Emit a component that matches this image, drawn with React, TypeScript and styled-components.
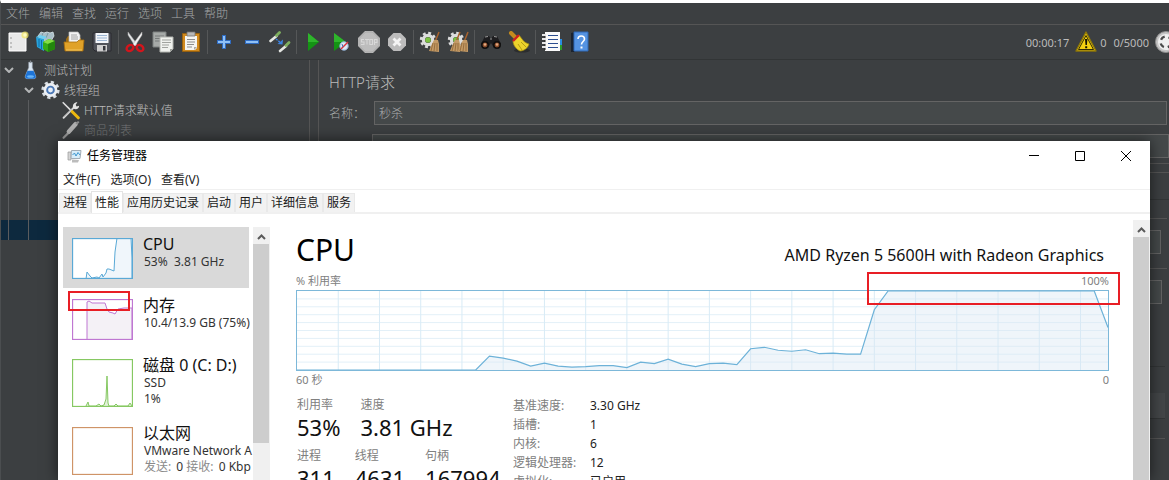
import React from "react";
import styled, { createGlobalStyle } from "styled-components";

const GlobalStyle = createGlobalStyle`
  * { box-sizing: border-box; }
  body {
    margin: 0;
    background: #3c3f41;
    font-family: "Noto Sans", "Noto Sans CJK SC", sans-serif;
    font-size: 12px;
  }
  button, input {
    font: inherit;
    color: inherit;
    margin: 0;
  }
`;

/* ---------- Host application ---------- */

const Desktop = styled.div`
  position: relative;
  display: flex;
  flex-direction: column;
  height: 100vh;
  overflow: hidden;
  border-top: 3px solid #ffffff;
  border-left: 1px solid #4b4e50;
  background: #3c3f41;
  color: #bbbbbb;
  font-weight: 300;
`;

const MenuBar = styled.nav`
  display: flex;
  gap: 9px;
  height: 22px;
  flex: none;
  padding-left: 5px;
  border-bottom: 1px solid #555555;
`;

const MenuButton = styled.button`
  padding: 0;
  border: 0;
  background: none;
  line-height: 20px;
  color: #a4a6a7;
`;

const Toolbar = styled.div`
  display: flex;
  align-items: center;
  height: 35px;
  flex: none;
  padding-left: 3px;
  border-bottom: 1px solid #323536;
`;

const ToolButton = styled.button`
  display: flex;
  align-items: center;
  justify-content: center;
  flex: none;
  width: 28px;
  height: 28px;
  padding: 0;
  border: 0;
  background: none;
`;

const ToolDivider = styled.span`
  flex: none;
  width: 1px;
  height: 24px;
  margin: 0 2px;
  background: #555758;
`;

const Status = styled.div`
  display: flex;
  align-items: center;
  flex: 1;
  justify-content: flex-end;
  min-width: 0;
  font-size: 11px;
  font-weight: 400;
  overflow: hidden;
`;

const StatusText = styled.span<{ $gap: number }>`
  margin-right: ${(p) => p.$gap}px;
  white-space: nowrap;
`;

const Clip = styled.span`
  display: flex;
  width: 14px;
  overflow: hidden;
  svg { flex: none; }
`;

const Workspace = styled.div`
  display: flex;
  flex: 1;
  min-height: 0;
`;

const Tree = styled.ul`
  flex: none;
  width: 309px;
  margin: 0;
  padding: 0;
  list-style: none;
  border-right: 1px solid #555555;
`;

const TreeRow = styled.li<{ $selected?: boolean; $muted?: boolean }>`
  display: flex;
  align-items: center;
  height: 20px;
  background: ${(p) => (p.$selected ? "#0d293e" : "none")};
  color: ${(p) => (p.$muted ? "#747677" : "#bbbbbb")};
  white-space: nowrap;
`;

const Indent = styled.span<{ $line?: boolean }>`
  flex: none;
  align-self: stretch;
  width: 20px;
  display: flex;
  align-items: center;
  justify-content: center;
  padding-right: 5px;
  &::before {
    content: "";
    display: ${(p) => (p.$line ? "block" : "none")};
    width: 1px;
    height: 20px;
    background: #5a5c5e;
  }
`;

const TreeIcon = styled.span`
  flex: none;
  display: flex;
  justify-content: center;
  width: 19px;
  margin-right: 4px;
`;

const Divider = styled.div`
  flex: none;
  width: 9px;
  border-right: 1px solid #555555;
`;

const Editor = styled.section`
  flex: 1;
  min-width: 0;
  padding: 11px 0 0 10px;
`;

const EditorTitle = styled.h1`
  margin: 0 0 8px;
  font-size: 15px;
  line-height: 22px;
  font-weight: 300;
`;

const Field = styled.label`
  display: flex;
  align-items: center;
  height: 24px;
  margin-right: 2px;
  color: #a9abac;
`;

const FieldName = styled.span`
  flex: none;
  width: 45px;
`;

const TextInput = styled.input`
  flex: 1;
  min-width: 0;
  height: 24px;
  padding: 0 4px;
  border: 1px solid #646464;
  border-radius: 0;
  background: #45494a;
  color: #a9abac;
  outline: none;
`;

const PanelBox = styled.div<{ $top: number; $height: number; $right: number; $kind: "box" | "light" | "dark" | "fill" }>`
  height: ${(p) => p.$height}px;
  margin: ${(p) => p.$top}px ${(p) => p.$right}px 0 43px;
  border: ${(p) => (p.$kind === "box" ? "1px solid #646464" : "0")};
  background: ${(p) =>
    ({ box: "#45494a", light: "#555555", dark: "#323536", fill: "#434648" })[p.$kind]};
`;

/* ---------- Task manager window ---------- */

const Window = styled.section`
  position: absolute;
  top: 138px;
  left: 57px;
  right: 19px;
  bottom: 0;
  display: flex;
  flex-direction: column;
  background: #ffffff;
  color: #000000;
  font-weight: 400;
  box-shadow: 0 0 14px rgba(0, 0, 0, 0.6);
`;

const TitleBar = styled.header`
  display: flex;
  align-items: center;
  flex: none;
  height: 29px;
  padding: 0 1px 0 9px;
`;

const WindowTitle = styled.h2`
  flex: 1;
  margin: 0 0 0 5px;
  font-size: 12px;
  line-height: 18px;
  font-weight: 400;
`;

const CaptionButton = styled.button`
  display: flex;
  align-items: center;
  justify-content: center;
  width: 46px;
  height: 29px;
  padding: 0;
  border: 0;
  background: none;
`;

const WindowMenu = styled.nav`
  display: flex;
  gap: 10px;
  flex: none;
  height: 20px;
  padding-left: 5px;
  border-bottom: 1px solid #f0f0f0;
`;

const WindowMenuButton = styled.button`
  padding: 0;
  border: 0;
  background: none;
  line-height: 19px;
  color: #222222;
`;

const Tabs = styled.div`
  display: flex;
  align-items: flex-end;
  flex: none;
  height: 24px;
  padding-left: 1px;
  border-bottom: 2px solid #f0f0f0;
`;

const Tab = styled.button<{ $active?: boolean }>`
  height: ${(p) => (p.$active ? 22 : 19)}px;
  margin-bottom: ${(p) => (p.$active ? -1 : 0)}px;
  padding: 0 3px;
  border: 1px solid ${(p) => (p.$active ? "#e4e4e4" : "#e9e9e9")};
  border-bottom: 0;
  background: ${(p) => (p.$active ? "#ffffff" : "#f2f2f2")};
  line-height: 18px;
  color: #1a1a1a;
  white-space: nowrap;
`;

const Body = styled.div`
  display: flex;
  flex: 1;
  min-height: 0;
  overflow: hidden;
  padding-left: 5px;
`;

const ResourceList = styled.div`
  flex: none;
  width: 190px;
  margin-top: 13px;
  overflow: hidden;
`;

const Resource = styled.button<{ $height: number; $active?: boolean }>`
  position: relative;
  display: flex;
  align-items: flex-start;
  gap: 10px;
  width: 186px;
  height: ${(p) => p.$height}px;
  padding: 7px 0 0 9px;
  border: 0;
  background: ${(p) => (p.$active ? "#d9d9d9" : "none")};
  text-align: left;
  white-space: nowrap;
`;

const Thumb = styled.svg`
  flex: none;
  margin-top: 4px;
`;

const ResourceText = styled.span`
  display: flex;
  flex-direction: column;
`;

const ResourceName = styled.span`
  font-size: 16px;
  line-height: 20px;
  color: #111111;
`;

const ResourceLine = styled.span`
  padding-left: 1px;
  line-height: 16px;
  color: #333333;
  white-space: pre;
`;

const Muted = styled.span`
  margin-right: 2px;
  color: #8a8a8a;
`;

const Marker = styled.span<{ $width: number; $height: number }>`
  position: absolute;
  width: ${(p) => p.$width}px;
  height: ${(p) => p.$height}px;
  border: 2px solid #e81e25;
  pointer-events: none;
`;

const ListMarker = styled(Marker)`
  top: 3px;
  left: 5px;
`;

const ChartMarker = styled(Marker)`
  top: 0;
  right: -11px;
`;

const ScrollBar = styled.div<{ $top: number }>`
  display: flex;
  flex-direction: column;
  flex: none;
  width: 17px;
  margin-top: ${(p) => p.$top}px;
  background: #f0f0f0;
`;

const ScrollArrow = styled.button`
  display: flex;
  align-items: center;
  justify-content: center;
  height: 17px;
  padding: 3px 0 0;
  border: 0;
  background: #f0f0f0;
`;

const ScrollThumb = styled.div<{ $height?: number }>`
  flex: ${(p) => (p.$height ? "none" : "1")};
  height: ${(p) => (p.$height ? p.$height + "px" : "auto")};
  margin-right: 1px;
  background: #cdcdcd;
`;

const Details = styled.div`
  flex: 1;
  min-width: 0;
  padding: 16px 24px 0 26px;
`;

const DetailsHead = styled.div`
  display: flex;
  justify-content: space-between;
  align-items: baseline;
  height: 42px;
  white-space: nowrap;
`;

const DetailsTitle = styled.h3`
  margin: 0;
  font-size: 30px;
  line-height: 40px;
  font-weight: 400;
`;

const Processor = styled.span`
  margin-right: 5px;
  font-size: 16px;
  color: #111111;
`;

const ChartBlock = styled.div`
  position: relative;
`;

const ChartLabels = styled.div`
  display: flex;
  justify-content: space-between;
  font-size: 11px;
  line-height: 18px;
  color: #808080;
`;

const Chart = styled.svg`
  display: block;
  width: 100%;
  height: 81px;
  border: 1px solid #7db8d9;
`;

const Stats = styled.div`
  display: flex;
  padding: 7px 0 0 1px;
`;

const StatGroup = styled.div`
  flex: none;
  width: 216px;
`;

const StatRow = styled.div<{ $gap: number }>`
  display: flex;
  gap: ${(p) => p.$gap}px;
  margin-bottom: 7px;
  white-space: nowrap;
`;

const Stat = styled.div`
  line-height: 18px;
  color: #808080;
`;

const StatValue = styled.div`
  font-size: 22px;
  line-height: 26px;
  color: #111111;
`;

const Specs = styled.table`
  border-collapse: collapse;
  align-self: flex-start;
  th, td {
    height: 19px;
    padding: 0;
    font-weight: 400;
    line-height: 19px;
    text-align: left;
    white-space: nowrap;
  }
  th {
    width: 77px;
    color: #808080;
  }
  td { color: #222222; }
`;

/* ---------- Icons ---------- */

const Icon = ({ children, size = 22 }: { children: React.ReactNode; size?: number }) => (
  <svg width={size} height={size} viewBox="0 0 22 22" fill="none" aria-hidden="true">
    {children}
  </svg>
);

const NewIcon = () => (
  <Icon>
    <path d="M2 2h17v18H2z" fill="#e9e9e9" stroke="#fff" />
    <path d="M4 6v2M4 11v2M4 15v2" stroke="#999" />
    <circle cx="18" cy="4" r="3.6" fill="#f3e66a" fillOpacity=".75" />
    <circle cx="18" cy="4" r="1.8" fill="#fffbc0" />
  </Icon>
);
const TemplatesIcon = () => (
  <Icon>
    <path d="M3 5l3-4 3 1 3-1 3 1 3-1 1 4-3 5-10-1z" fill="#a9bec7" stroke="#d9e6ea" strokeWidth=".8" />
    <path d="M8 2l-2 5M13 2l-2 5" stroke="#6f8a95" strokeWidth=".8" />
    <path d="M1 6l8 2v12l-7-4z" fill="#29a3dc" />
    <path d="M1 6l4-2 7 2-3 2z" fill="#6fd0f2" />
    <path d="M4 8v8M6.500 9v9" stroke="#0d6ea8" />
    <path d="M8 11l6-3 6 2v8l-7 3-5-3z" fill="#37ac16" />
    <path d="M8 11l6-3 6 2-7 3z" fill="#83dd45" />
    <path d="M13 13v8l7-3v-8z" fill="#23870d" />
  </Icon>
);
const OpenIcon = () => (
  <Icon>
    <path d="M3 8l2-3h4l9 2v8H3z" fill="#9c6a12" />
    <path d="M6 1h9l2 3v9H6z" fill="#f3f3f3" stroke="#bbb" strokeWidth=".7" />
    <path d="M8 4h6M8 6h7M8 8h7" stroke="#8f8f8f" strokeWidth=".8" />
    <path d="M1 11h13l2-2h5l-1 11H2z" fill="#e0a229" stroke="#a96f0d" strokeWidth=".8" />
    <path d="M3 19h16" stroke="#f2c763" />
  </Icon>
);
const SaveIcon = () => (
  <Icon>
    <path d="M2 2h18v18H4l-2-2z" fill="#50535a" stroke="#2a2b30" />
    <path d="M4.500 2h13v10h-13z" fill="#f2f5f9" />
    <path d="M6 4.500h10M6 7h10M6 9.500h10" stroke="#9bb5d2" />
    <path d="M6 14h10v6.500H6z" fill="#cfcfcf" />
    <path d="M12 15h2.500v4.500H12z" fill="#33353b" />
  </Icon>
);
const CutIcon = () => (
  <Icon>
    <path d="M4 1l9 12-2 2L4 4z" fill="#e3e6e8" stroke="#a9a9a9" strokeWidth=".5" />
    <path d="M18 1L9 13l2 2 7-11z" fill="#f5f5f5" stroke="#a9a9a9" strokeWidth=".5" />
    <ellipse cx="6" cy="17" rx="3.600" ry="2.800" transform="rotate(-35 6 17)" stroke="#d3151c" strokeWidth="2.400" />
    <ellipse cx="16" cy="17" rx="3.600" ry="2.800" transform="rotate(35 16 17)" stroke="#d3151c" strokeWidth="2.400" />
  </Icon>
);
const CopyIcon = () => (
  <Icon>
    <path d="M1 1h13v15H1z" fill="#a6aaa8" stroke="#7d8180" />
    <path d="M3 5h9M3 7.500h9M3 10h9" stroke="#777b7a" />
    <path d="M8 6h13v12l-3 3H8z" fill="#f0f2ee" stroke="#b2b5b0" />
    <path d="M10 9h9M10 11.500h9M10 14h7M10 16.500h6" stroke="#a0a39e" />
    <path d="M18 21v-3h3z" fill="#9b9e99" />
  </Icon>
);
const PasteIcon = () => (
  <Icon>
    <path d="M2.500 2.500h17v18h-17z" fill="#d08a1f" stroke="#96600f" />
    <path d="M5 5h12v12l-2 2H5z" fill="#f5f5f2" />
    <path d="M7 1h8v4H7z" fill="#b8b8b8" stroke="#747474" strokeWidth=".8" />
    <path d="M7 8.500h8M7 11h8M7 13.500h7M7 16h5" stroke="#8d8d8d" />
    <path d="M14 19v-3h3z" fill="#aaa" />
  </Icon>
);
const PlusIcon = () => (
  <Icon>
    <path d="M11 4v14M4 11h14" stroke="#2f6bc0" strokeWidth="4" />
    <path d="M11 5v12M5 11h12" stroke="#8fc0f5" strokeWidth="2" />
  </Icon>
);
const MinusIcon = () => (
  <Icon>
    <path d="M4 11h14" stroke="#2f6bc0" strokeWidth="4" />
    <path d="M5 11h12" stroke="#8fc0f5" strokeWidth="2" />
  </Icon>
);
const ToggleIcon = () => (
  <Icon>
    <path d="M1.500 10l6-5" stroke="#e4e6e2" strokeWidth="2.600" strokeLinecap="round" />
    <path d="M7.500 4.500l3-3" stroke="#7fb05f" strokeWidth="2.800" strokeLinecap="round" />
    <path d="M11 20l6-5" stroke="#e4e6e2" strokeWidth="2.600" strokeLinecap="round" />
    <path d="M17 14.500l3-3" stroke="#7fb05f" strokeWidth="2.800" strokeLinecap="round" />
    <path d="M7 8l5 4" stroke="#3b82e0" strokeWidth="1.400" strokeDasharray="2 1" />
    <path d="M14 8.500l-.5 5-5-.5z" fill="#3b82e0" />
  </Icon>
);
const PlayIcon = () => (
  <Icon>
    <path d="M6 2l11 9-11 9z" fill="#149314" />
    <path d="M6 2l11 9H6z" fill="#2fb52c" />
  </Icon>
);
const PlayNoPauseIcon = () => (
  <Icon>
    <path d="M4 2l12 9-12 9z" fill="#149314" />
    <path d="M4 2l12 9H4z" fill="#2fb52c" />
    <circle cx="14" cy="15" r="4.200" fill="#dfe9f5" stroke="#8fb0d8" />
    <path d="M11 18l7-7" stroke="#d9333a" strokeWidth="1.500" />
    <path d="M12 13l1 3" stroke="#3d74bd" />
  </Icon>
);
const StopIcon = () => (
  <Icon>
    <path d="M7 0h8l7 7v8l-7 7H7l-7-7V7z" fill="#bdbdbd" />
    <path d="M7.500 1h7L21 7.500v7L14.500 21h-7L1 14.500v-7z" stroke="#a9a9a9" />
    <g stroke="#d8d8d8" strokeWidth="1.100">
      <path d="M6 8.500H3.500V11H6v2.500H3M7 8.500h4M9 8.500v5M11.800 8.500h2.700v5h-2.700zM16.500 14V8.500H19v3h-2.500" />
    </g>
  </Icon>
);
const ShutdownIcon = () => (
  <Icon>
    <path d="M7.500 2h7L20 7.500v7L14.500 20h-7L2 14.500v-7z" fill="#bcbcbc" />
    <path d="M7.500 7.500l7 7M14.500 7.500l-7 7" stroke="#f4f4f4" strokeWidth="2.800" />
  </Icon>
);
const Bristles = ({ x }: { x: number }) => (
  <g transform={`translate(${x} 0)`}>
    <path d="M10 1l-4 10" stroke="#a8622d" strokeWidth="1.500" />
    <path d="M5 9h4l1 4v8l-10-1 2-5z" fill="#c39a66" />
    <path d="M4 12l-2 8M6 12l-1 8M8 12v8" stroke="#8a6232" strokeWidth=".8" />
  </g>
);
const Cog = ({ cx, cy, color, core }: { cx: number; cy: number; color: string; core: string }) => (
  <g>
    <circle cx={cx} cy={cy} r="6.800" stroke={color} strokeWidth="2.800" strokeDasharray="2.800 2.540" />
    <circle cx={cx} cy={cy} r="4.600" stroke={color} strokeWidth="3.200" />
    <circle cx={cx} cy={cy} r="2.800" fill={core} />
  </g>
);
const ClearIcon = () => (
  <Icon>
    <Cog cx={9} cy={9} color="#dddddd" core="#7cc243" />
    <Bristles x={10} />
  </Icon>
);
const ClearAllIcon = () => (
  <Icon>
    <Cog cx={9} cy={9} color="#dddddd" core="#7cc243" />
    <Bristles x={3} />
    <Bristles x={11} />
  </Icon>
);
const SearchIcon = () => (
  <Icon>
    <path d="M1 13l4-8h4l2 3 2-3h4l4 8-2 4h-5l-3-5-3 5H3z" fill="#1d1d1f" />
    <path d="M5 6l3-.5M14 5.500l3 .5M10 8h2" stroke="#9a9a9a" />
    <circle cx="5" cy="14" r="3.200" fill="#8b4c2a" stroke="#0e0e0e" strokeWidth="1.500" />
    <circle cx="17" cy="14" r="3.200" fill="#8b4c2a" stroke="#0e0e0e" strokeWidth="1.500" />
    <circle cx="5" cy="13.500" r="1.300" fill="#e0a880" />
    <circle cx="17" cy="13.500" r="1.300" fill="#e0a880" />
  </Icon>
);
const BroomIcon = () => (
  <Icon>
    <ellipse cx="14" cy="19.500" rx="8" ry="2" fill="#2b2d2e" />
    <path d="M3 2l5 5" stroke="#c58a1d" strokeWidth="4" strokeLinecap="round" />
    <path d="M5 10l6-6 3 4c2 3 4 4 7 5-1 4-5 7-9 7-4-2-7-6-7-10z" fill="#ecd32c" stroke="#a18a10" strokeWidth=".7" />
    <path d="M5 10l6-6" stroke="#cf2020" strokeWidth="2.400" />
    <path d="M10 13l4 6M13 11l5 5" stroke="#b59d15" />
  </Icon>
);
const FunctionIcon = () => (
  <Icon>
    <path d="M18 8h3v6h-3z" fill="#2b8de0" />
    <path d="M18 14h3v5h-3z" fill="#2b9a2b" />
    <path d="M4 1h15v19H4z" fill="#fafafa" />
    <path d="M7 4.500h10M7 8.500h10M7 12.500h10M7 16.500h10" stroke="#2c4d8f" strokeWidth="1.200" />
    <path d="M1 4h4M1 8h4M1 12h4M1 16h4" stroke="#e6e6e6" strokeWidth="1.800" />
    <path d="M3 6h2M3 10h2M3 14h2M3 18h2" stroke="#222" />
  </Icon>
);
const HelpIcon = () => (
  <Icon>
    <path d="M2 2l4-1v20H2z" fill="#1b2330" />
    <path d="M5 1h14v19H5z" fill="#5593e2" stroke="#2e69b7" />
    <path d="M9 8c0-4 6.500-4 6.500 0 0 2.500-3 2.500-3 5.500" stroke="#fff" strokeWidth="1.600" />
    <path d="M11.500 15.500h2v2h-2z" fill="#fff" />
  </Icon>
);
const WarningIcon = () => (
  <Icon>
    <path d="M11 1l10 19H1z" fill="#f4d011" stroke="#8d7608" strokeWidth="1.400" strokeLinejoin="round" />
    <path d="M11 4.500l7.500 14h-15z" stroke="#1c1a05" strokeWidth=".9" />
    <path d="M10 8h2.400l-.5 6h-1.400zM10.200 15.300h2v2h-2z" fill="#151300" />
  </Icon>
);
const ThreadsIcon = () => (
  <Icon>
    <circle cx="11" cy="11" r="10.500" fill="#c4c4c4" stroke="#8c8c8c" />
    <circle cx="11" cy="11" r="8" fill="#efefef" />
    <circle cx="11" cy="11" r="5.500" stroke="#4a4a4a" strokeWidth="2.400" strokeDasharray="4.600 4.040" strokeDashoffset="-2" />
  </Icon>
);
const FlaskIcon = () => (
  <Icon size={20}>
    <path d="M9 2h4v6l4 10c.5 2-.5 3-2 3H7c-1.500 0-2.500-1-2-3L9 8z" fill="#dbe6f1" stroke="#a7b3bf" strokeWidth=".7" />
    <path d="M7.500 12h7l2.500 6c.5 2-.5 3-2 3H7c-1.500 0-2.500-1-2-3z" fill="#1d74d8" />
    <ellipse cx="11" cy="18.500" rx="4" ry="1.500" fill="#68b4f7" />
    <path d="M11 0v3" stroke="#8a9096" />
  </Icon>
);
const GearIcon = () => (
  <Icon size={20}>
    <circle cx="11" cy="11" r="8.800" stroke="#d9dee4" strokeWidth="3.600" strokeDasharray="3.600 3.310" />
    <circle cx="11" cy="11" r="6.500" fill="#4a77b5" stroke="#eceff3" strokeWidth="3" />
    <circle cx="11" cy="11" r="2.800" fill="#e6edf6" />
  </Icon>
);
const ToolsIcon = () => (
  <Icon size={20}>
    <path d="M3 20l12-12" stroke="#d7d7d7" strokeWidth="2.200" strokeLinecap="round" />
    <path d="M14 9c-1-4 1-7 5-7l-2 3 1 2 3-1c0 4-4 5-7 3z" fill="#e4e4e4" />
    <path d="M2 2l10 10" stroke="#dfdfdf" strokeWidth="1.800" />
    <path d="M13 13l7 7" stroke="#edb80f" strokeWidth="3.600" strokeLinecap="round" />
    <path d="M3 19l9-9" stroke="#777" strokeWidth=".6" />
  </Icon>
);
const PipetteIcon = () => (
  <Icon size={20}>
    <path d="M3 20l8-8" stroke="#9a9a9a" strokeWidth="2.600" strokeLinecap="round" />
    <path d="M9 13l8-9" stroke="#b0b0b0" strokeWidth="5" strokeLinecap="round" />
    <path d="M18 3l2-1" stroke="#8d8d8d" strokeWidth="2.400" strokeLinecap="round" />
  </Icon>
);
const ChevronIcon = () => (
  <svg width="10" height="6" viewBox="0 0 10 6" fill="none" aria-hidden="true">
    <path d="M1 1l4 4 4-4" stroke="#b4b6b7" strokeWidth="2" />
  </svg>
);
const ArrowUpIcon = () => (
  <svg width="9" height="6" viewBox="0 0 9 6" fill="none" aria-hidden="true">
    <path d="M1 5l3.500-3.500L8 5" stroke="#5a5a5a" strokeWidth="2" />
  </svg>
);
const TaskIcon = () => (
  <svg width="15" height="14" viewBox="0 0 15 14" fill="none" aria-hidden="true">
    <path d="M1 3h3v8H1z" fill="#d5d5d5" stroke="#999" strokeWidth=".7" />
    <path d="M4.500 1.500h9.500l-1 8H4z" fill="#d8edf9" stroke="#a3adb5" />
    <path d="M5.500 6l2-2 1.500 3 2-3.500L13 6" stroke="#3d96cf" />
    <path d="M5 10.500l7 .5-1 2.500H5z" fill="#bcbcbc" />
  </svg>
);

/* ---------- Data ---------- */

const toolGroups: [string, () => React.JSX.Element][][] = [
  [["新建", NewIcon], ["模板", TemplatesIcon], ["打开", OpenIcon], ["保存", SaveIcon]],
  [["剪切", CutIcon], ["复制", CopyIcon], ["粘贴", PasteIcon]],
  [["展开", PlusIcon], ["折叠", MinusIcon], ["切换", ToggleIcon]],
  [["启动", PlayIcon], ["不停顿启动", PlayNoPauseIcon], ["停止", StopIcon], ["关闭", ShutdownIcon]],
  [["清除", ClearIcon], ["清除全部", ClearAllIcon]],
  [["搜索", SearchIcon], ["重置搜索", BroomIcon]],
  [["函数助手", FunctionIcon], ["帮助", HelpIcon]],
];

/* Height below the top of the 80-unit chart, one sample per second. */
const cpuSamples = [
  ...Array(14).fill(80), 66, 68, 71, 76, 73, 76, 77, 76.5, 75.5, 75.5, 77.5, 72, 73.5, 69, 74, 76.5, 73.5, 73, 74.5,
  58.5, 57, 60, 61, 59.5, 63.5, 63, 64, 64, 19, ...Array(16).fill(0), 37,
];
const cpuPoints = cpuSamples.map((y, i) => `${i * 10},${y}`).join(" ");
const verticalGrid = Array.from({ length: 19 }, (_, i) => (i + 1) * 30);
const horizontalGrid = Array.from({ length: 9 }, (_, i) => (i + 1) * 8);

const specs = [
  ["基准速度:", "3.30 GHz"],
  ["插槽:", "1"],
  ["内核:", "6"],
  ["逻辑处理器:", "12"],
  ["虚拟化:", "已启用"],
];

const Spark = ({ height, color, fill, line }: { height: number; color: string; fill: string; line?: string }) => (
  <Thumb width="61" height={height} viewBox={`0 0 61 ${height}`} fill="none" aria-hidden="true">
    <rect x=".5" y=".5" width="60" height={height - 1} fill="#fff" />
    {line && <polyline points={line} fill={fill} stroke={color} />}
    <rect x=".5" y=".5" width="60" height={height - 1} stroke={color} strokeWidth="1.300" />
  </Thumb>
);

export default function App() {
  return (
    <>
      <GlobalStyle />
      <Desktop>
        <MenuBar>
          {["文件", "编辑", "查找", "运行", "选项", "工具", "帮助"].map((m) => (
            <MenuButton key={m}>{m}</MenuButton>
          ))}
        </MenuBar>
        <Toolbar>
          {toolGroups.map((group, i) => (
            <React.Fragment key={i}>
              {i > 0 && <ToolDivider />}
              {group.map(([name, Glyph]) => (
                <ToolButton key={name} aria-label={name}>
                  <Glyph />
                </ToolButton>
              ))}
            </React.Fragment>
          ))}
          <Status>
            <StatusText $gap={6}>00:00:17</StatusText>
            <WarningIcon />
            <StatusText $gap={7}>&nbsp;0</StatusText>
            <StatusText $gap={6}>0/5000</StatusText>
            <Clip>
              <ThreadsIcon />
            </Clip>
          </Status>
        </Toolbar>
        <Workspace>
          <Tree>
            <TreeRow>
              <Indent><ChevronIcon /></Indent>
              <TreeIcon><FlaskIcon /></TreeIcon>
              测试计划
            </TreeRow>
            <TreeRow>
              <Indent $line />
              <Indent><ChevronIcon /></Indent>
              <TreeIcon><GearIcon /></TreeIcon>
              线程组
            </TreeRow>
            <TreeRow>
              <Indent $line />
              <Indent $line />
              <Indent />
              <TreeIcon><ToolsIcon /></TreeIcon>
              HTTP请求默认值
            </TreeRow>
            <TreeRow $muted>
              <Indent $line />
              <Indent $line />
              <Indent />
              <TreeIcon><PipetteIcon /></TreeIcon>
              商品列表
            </TreeRow>
            {[0, 1, 2, 3, 4].map((n) => (
              <TreeRow key={n} $selected={n === 4}>
                <Indent $line />
                <Indent $line />
              </TreeRow>
            ))}
          </Tree>
          <Divider />
          <Editor>
            <EditorTitle>HTTP请求</EditorTitle>
            <Field>
              <FieldName>名称：</FieldName>
              <TextInput defaultValue="秒杀" />
            </Field>
            <PanelBox $kind="box" $top={9} $height={24} $right={0} />
            <PanelBox $kind="light" $top={5} $height={1} $right={0} />
            <PanelBox $kind="light" $top={8} $height={1} $right={0} />
            <PanelBox $kind="dark" $top={26} $height={1} $right={0} />
            <PanelBox $kind="light" $top={18} $height={1} $right={2} />
            <PanelBox $kind="box" $top={11} $height={24} $right={8} />
            <PanelBox $kind="light" $top={14} $height={1} $right={2} />
            <PanelBox $kind="box" $top={11} $height={24} $right={7} />
            <PanelBox $kind="dark" $top={62} $height={1} $right={4} />
            <PanelBox $kind="fill" $top={26} $height={25} $right={4} />
            <PanelBox $kind="dark" $top={0} $height={1} $right={4} />
            <PanelBox $kind="light" $top={19} $height={1} $right={4} />
          </Editor>
        </Workspace>

        <Window>
          <TitleBar>
            <TaskIcon />
            <WindowTitle>任务管理器</WindowTitle>
            <CaptionButton aria-label="最小化">
              <svg width="10" height="10" viewBox="0 0 10 10"><path d="M0 4.500h10" stroke="#000" /></svg>
            </CaptionButton>
            <CaptionButton aria-label="最大化">
              <svg width="10" height="10" viewBox="0 0 10 10" fill="none"><path d="M.5.500h9v9h-9z" stroke="#000" /></svg>
            </CaptionButton>
            <CaptionButton aria-label="关闭">
              <svg width="10" height="10" viewBox="0 0 10 10"><path d="M0 0l10 10M10 0L0 10" stroke="#000" /></svg>
            </CaptionButton>
          </TitleBar>
          <WindowMenu>
            {["文件(F)", "选项(O)", "查看(V)"].map((m) => (
              <WindowMenuButton key={m}>{m}</WindowMenuButton>
            ))}
          </WindowMenu>
          <Tabs>
            {["进程", "性能", "应用历史记录", "启动", "用户", "详细信息", "服务"].map((t) => (
              <Tab key={t} $active={t === "性能"}>{t}</Tab>
            ))}
          </Tabs>
          <Body>
            <ResourceList>
              <Resource $height={61} $active>
                <Spark height={41} color="#5aa9d6" fill="#f0f6fb"
                  line="14,41 15,34 18,38 20,40 25,39 27,40 30,36 31,39 34,35 35,31 37,31 42,33 43,14 45,0 59,0 60,20 60,41" />
                <ResourceText>
                  <ResourceName>CPU</ResourceName>
                  <ResourceLine>{"53%  3.81 GHz"}</ResourceLine>
                </ResourceText>
              </Resource>
              <Resource $height={60}>
                <Spark height={41} color="#bf77d2" fill="#f4f1f6"
                  line="15,41 15,3 17,2 20,4 33,4 35,10 37,13 41,14 43,15 46,10 52,9 60,9 60,41" />
                <ResourceText>
                  <ResourceName>内存</ResourceName>
                  <ResourceLine>10.4/13.9 GB (75%)</ResourceLine>
                </ResourceText>
                <ListMarker $width={62} $height={20} />
              </Resource>
              <Resource $height={68}>
                <Spark height={48} color="#86c862" fill="#e2f1da"
                  line="14,47 16,43 17,47 24,47 27,45 29,47 32,46 34,40 35,17 36,44 37,47 42,47 44,45 46,47 56,47 58,44 60,47" />
                <ResourceText>
                  <ResourceName>磁盘 0 (C: D:)</ResourceName>
                  <ResourceLine>SSD</ResourceLine>
                  <ResourceLine>1%</ResourceLine>
                </ResourceText>
              </Resource>
              <Resource $height={68}>
                <Spark height={48} color="#cf9467" fill="none" />
                <ResourceText>
                  <ResourceName>以太网</ResourceName>
                  <ResourceLine>VMware Network A</ResourceLine>
                  <ResourceLine>
                    <Muted>发送:</Muted> 0 <Muted>接收:</Muted> 0 Kbp
                  </ResourceLine>
                </ResourceText>
              </Resource>
            </ResourceList>
            <ScrollBar $top={13}>
              <ScrollArrow aria-label="向上滚动"><ArrowUpIcon /></ScrollArrow>
              <ScrollThumb $height={199} />
            </ScrollBar>
            <Details>
              <DetailsHead>
                <DetailsTitle>CPU</DetailsTitle>
                <Processor>AMD Ryzen 5 5600H with Radeon Graphics</Processor>
              </DetailsHead>
              <ChartBlock>
                <ChartLabels>
                  <span>% 利用率</span>
                  <span>100%</span>
                </ChartLabels>
                <Chart viewBox="0 0 590 80" preserveAspectRatio="none" role="img" aria-label="CPU">
                  <g stroke="#e3f0f8">
                    {horizontalGrid.map((y) => (
                      <line key={y} x1="0" x2="590" y1={y} y2={y} vectorEffect="non-scaling-stroke" />
                    ))}
                    {verticalGrid.map((x) => (
                      <line key={x} x1={x} x2={x} y1="0" y2="80" stroke="#d8ebf6" vectorEffect="non-scaling-stroke" />
                    ))}
                  </g>
                  <polygon points={`0,80 ${cpuPoints} 590,80`} fill="#d9e8f3" fillOpacity=".42" />
                  <polyline points={cpuPoints} fill="none" stroke="#6db2d8" strokeWidth="1.200" vectorEffect="non-scaling-stroke" />
                </Chart>
                <ChartLabels>
                  <span>60 秒</span>
                  <span>0</span>
                </ChartLabels>
                <ChartMarker $width={253} $height={33} />
              </ChartBlock>
              <Stats>
                <StatGroup>
                  <StatRow $gap={20}>
                    <Stat>利用率<StatValue>53%</StatValue></Stat>
                    <Stat>速度<StatValue>3.81 GHz</StatValue></Stat>
                  </StatRow>
                  <StatRow $gap={20}>
                    <Stat>进程<StatValue>311</StatValue></Stat>
                    <Stat>线程<StatValue>4631</StatValue></Stat>
                    <Stat>句柄<StatValue>167994</StatValue></Stat>
                  </StatRow>
                </StatGroup>
                <Specs>
                  <tbody>
                    {specs.map(([name, value]) => (
                      <tr key={name}>
                        <th scope="row">{name}</th>
                        <td>{value}</td>
                      </tr>
                    ))}
                  </tbody>
                </Specs>
              </Stats>
            </Details>
            <ScrollBar $top={6}>
              <ScrollArrow aria-label="向上滚动"><ArrowUpIcon /></ScrollArrow>
              <ScrollThumb />
            </ScrollBar>
          </Body>
        </Window>
      </Desktop>
    </>
  );
}
